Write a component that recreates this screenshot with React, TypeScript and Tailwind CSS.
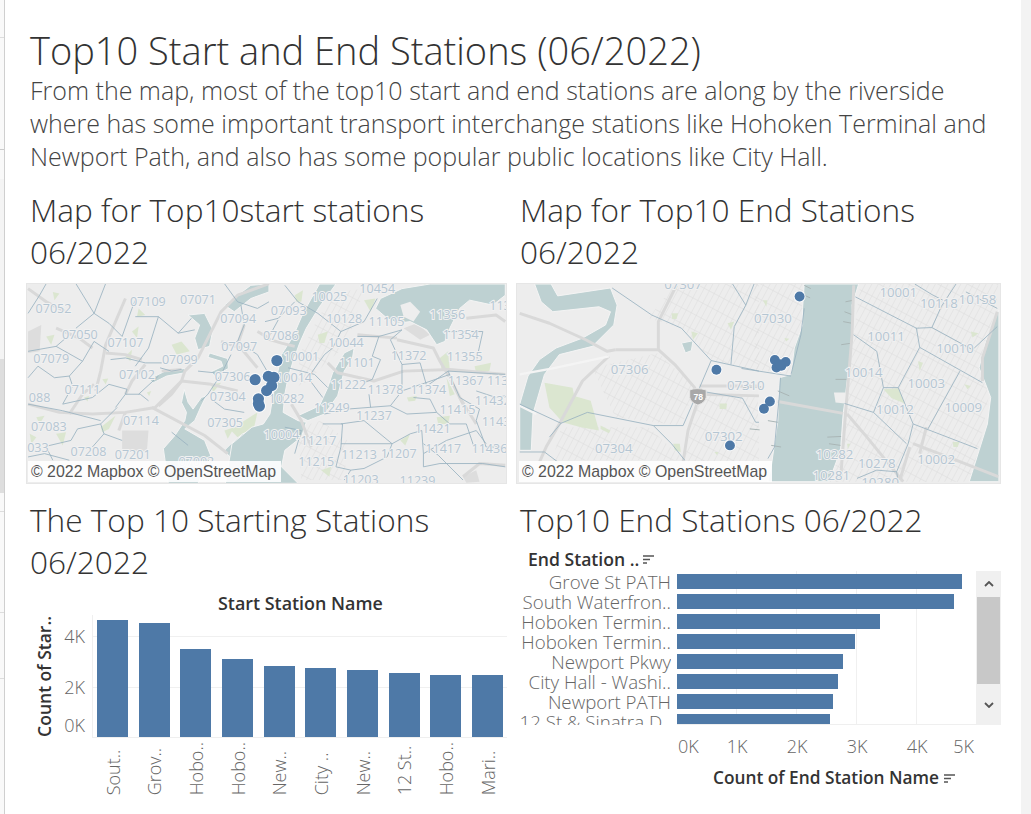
type Tile = {
  offset: [number, number]
  water: string[]
  land?: string[]
  parks: string[]
  grey?: string[]
  grids?: string[]
  roads: string[]
  minor?: string[]
  piers?: string[]
  lines: string[]
  labels: [string, number, number][]
}

// map coordinates are 3x screen pixels, every tile has its own origin
const startTiles: Tile[] = [
  {
    offset: [-6, -6],
    water: [
      'M478,325 L490,365 L505,385 L530,350 L545,345 L530,375 L510,420 L480,445 L540,480 L560,530 L520,610 L430,610 L415,505 L450,465 L480,420 L485,395 L470,365 Z',
      'M735,440 L700,445 L655,460 L620,490 L600,510 L640,560 L735,610 Z',
      'M490,100 L540,95 L565,145 L555,195 L520,205 L510,170 L525,130 Z',
      'M600,70 L640,40 L680,10 L735,6 L735,30 L680,50 L630,90 Z',
      'M555,215 L610,232 L612,262 L570,285 L560,272 L595,255 L590,240 L550,228 Z',
      'M370,295 L420,270 L480,262 L480,275 L425,285 L385,305 Z',
    ],
    parks: [
      'M440,190 L470,180 L495,210 L455,220 Z',
      'M225,440 L270,405 L250,445 L230,455 Z',
      'M660,420 L700,395 L690,440 L640,470 L620,450 Z',
      'M300,225 L320,205 L315,240 Z',
      'M60,165 L85,160 L75,190 Z',
      'M10,150 L35,170 L15,205 Z',
      'M320,150 L340,135 L335,170 Z',
      'M30,410 L55,405 L40,430 Z',
      'M90,460 L120,455 L110,495 Z',
      'M80,30 L100,35 L85,55 Z',
      'M560,310 L590,305 L565,335 Z',
      'M340,80 L360,100 L335,105 Z',
      'M10,460 L30,470 L15,490 Z',
      'M230,295 L248,292 L240,310 Z',
      'M175,350 L190,345 L185,362 Z',
      'M365,335 L378,330 L372,345 Z',
      'M600,450 L630,440 L610,475 Z',
    ],
    grey: ['M290,450 L370,450 L365,515 L290,510 Z', 'M5,150 L45,130 L40,210 L5,215 Z'],
    roads: [
      'M5,370 L100,395 L200,400 L300,395 L390,380 L470,300 L480,270 L520,230 L590,90 L640,40 L735,5',
      'M380,380 L540,465 L610,520',
      'M300,50 L270,120 L240,190 L225,270 L210,330',
      'M280,450 L300,395',
      'M5,20 L60,60 L120,90',
      'M470,300 L560,310 L640,330',
      'M350,235 L300,220 L240,215',
      'M410,270 L470,265',
      'M660,130 L640,190',
      'M700,150 L735,170',
      'M130,400 L170,340 L205,310',
      'M200,200 L160,170 L90,140',
      'M470,300 L440,340 L400,375',
      'M360,250 L320,300 L300,340',
      'M590,180 L650,200 L700,260',
    ],
    lines: [
      'M5,95 L40,40 L60,5',
      'M150,5 L205,95 L150,140',
      'M205,95 L250,125 L290,165 L320,80 L330,55',
      'M330,105 L400,105 L460,155 L510,145',
      'M400,105 L370,200 L330,255',
      'M255,235 L300,230 L360,245 L410,245',
      'M5,210 L90,195 L170,240 L205,180 L250,210',
      'M5,290 L35,255 L85,290 L130,285 L170,240',
      'M130,285 L140,315 L110,370 L200,350 L250,310 L305,325 L300,340 L270,380',
      'M5,370 L110,390 L225,420',
      'M225,430 L275,380',
      'M225,430 L155,445 L135,480 L50,500',
      'M225,430 L235,460 L200,500',
      'M235,460 L290,480',
      'M300,340 L345,340 L370,360',
      'M405,260 L440,270 L470,265',
      'M560,355 L600,385 L660,395',
      'M340,340 L400,285',
      'M440,455 L490,495',
      'M5,530 L55,520 L130,540',
      'M460,155 L500,110',
      'M600,5 L640,60 L700,80 L735,60',
      'M650,70 L660,130 L640,180',
      'M590,190 L640,180 L700,220 L735,280',
      'M620,220 L590,280 L550,340 L530,360',
      'M520,270 L570,275',
      'M240,5 L205,95',
      'M125,165 L90,195',
      'M60,500 L80,540',
    ],
    labels: [
      ['07052', 82, 94],
      ['07109', 368, 73],
      ['07071', 520, 68],
      ['07094', 642, 124],
      ['07050', 162, 174],
      ['07107', 300, 198],
      ['07097', 645, 209],
      ['07079', 75, 245],
      ['07099', 465, 248],
      ['07102', 335, 294],
      ['07306', 625, 300],
      ['07111', 170, 340],
      ['07304', 610, 362],
      ['088', 40, 364],
      ['07114', 347, 433],
      ['07305', 602, 438],
      ['07083', 68, 452],
      ['033', 35, 514],
      ['07208', 188, 527],
      ['07201', 322, 537],
      ['07002', 515, 556],
    ],
  },
  {
    offset: [717, -6],
    water: [
      'M165,6 L215,6 L165,75 L125,140 L105,185 L85,240 L70,290 L60,340 L55,395 L100,420 L125,425 L110,470 L60,510 L50,560 L100,610 L-120,610 L-100,490 L-40,440 L-5,430 L15,400 L25,340 L35,290 L50,220 L85,165 L115,95 Z',
      'M335,80 L350,50 L415,20 L500,6 L728,6 L728,40 L690,70 L620,55 L590,80 L560,140 L545,180 L520,190 L490,145 L440,120 L400,125 L370,110 Z',
      'M270,200 L240,215 L205,275 L190,320 L165,375 L100,405 L130,420 L180,400 L220,345 L240,270 L265,230 Z',
    ],
    land: ['M410,70 L440,60 L470,90 L450,120 L420,105 Z'],
    parks: [
      'M90,40 L115,25 L110,60 L95,60 Z',
      'M160,160 L190,150 L180,185 L165,185 Z',
      'M530,230 L555,210 L560,270 L535,270 Z',
      'M635,255 L685,245 L680,270 L640,275 Z',
      'M550,290 L575,340 L560,345 Z',
      'M430,350 L460,345 L455,360 L435,362 Z',
      'M520,410 L560,405 L555,430 L525,430 Z',
      'M410,480 L440,460 L425,495 Z',
      'M170,570 L200,560 L195,590 Z',
      'M300,55 L335,50 L320,90 Z',
      'M480,6 L530,10 L500,25 Z',
    ],
    grey: ['M420,140 L460,125 L500,160 L470,175 Z', 'M600,590 L640,570 L650,605 L610,608 Z'],
    grids: [
      'M225,30 L300,20 L250,190 L190,240 L130,300 L90,320 L110,210 L165,100 Z',
      'M100,440 L170,420 L250,480 L240,600 L110,600 Z',
    ],
    roads: [
      'M190,245 L220,275 L330,300 L420,270 L560,265 L728,280',
      'M400,175 L510,200 L530,240 L560,290 L600,370',
      'M0,170 L50,185 L90,195',
      'M80,370 L110,420 L140,500',
      'M590,350 L640,430',
      'M600,590 L650,550 L728,555',
      'M610,110 L700,100 L728,120',
      'M280,160 L400,170',
    ],
    lines: [
      'M0,120 L40,110 L90,60',
      'M40,115 L10,170',
      'M160,95 L230,150 L300,120 L340,50',
      'M230,150 L205,200 L180,220',
      'M180,220 L130,290 L175,350',
      'M70,260 L150,280 L190,320',
      'M280,165 L345,165 L325,225 L350,235 L325,295 L300,305',
      'M345,165 L415,145 L380,175 L415,250 L415,330 L380,375 L430,400 L520,395 L500,355 L450,350',
      'M415,250 L470,245 L490,315 L555,270 L590,350 L650,385 L640,420 L670,500 L725,500',
      'M555,270 L728,280',
      'M415,330 L560,280',
      'M180,400 L250,385 L380,375',
      'M230,430 L300,420 L385,490 L440,460 L475,450 L480,520 L550,480 L640,450',
      'M175,430 L235,430 L230,500 L215,560 L260,570',
      'M230,490 L385,490 L370,530 L300,565 L260,570 L240,600',
      'M480,490 L525,525 L600,600',
      'M480,520 L480,560 L530,550 L660,550 L728,560',
      'M640,450 L670,490',
      'M315,340 L320,380',
      'M520,395 L560,430 L610,430 L640,520',
      'M60,10 L100,60 L160,95',
      'M540,150 L660,150 L640,240',
      'M640,330 L700,350 L728,345',
      'M60,440 L110,450 L90,520',
    ],
    labels: [
      ['10454', 340, 33],
      ['10025', 195, 59],
      ['07093', 72, 100],
      ['113', 712, 86],
      ['10128', 240, 124],
      ['11105', 368, 132],
      ['11356', 552, 113],
      ['07086', 48, 177],
      ['10044', 245, 196],
      ['11354', 593, 173],
      ['10001', 110, 240],
      ['11101', 278, 257],
      ['11372', 435, 237],
      ['11355', 605, 238],
      ['10014', 88, 303],
      ['11367', 608, 313],
      ['11222', 252, 323],
      ['11378', 365, 339],
      ['11374', 495, 339],
      ['113', 705, 313],
      ['10282', 65, 367],
      ['11432', 690, 373],
      ['11249', 202, 393],
      ['11415', 583, 399],
      ['11237', 330, 417],
      ['11421', 508, 459],
      ['1143', 700, 437],
      ['10004', 50, 475],
      ['11217', 162, 495],
      ['11417', 540, 517],
      ['11436', 680, 519],
      ['11213', 285, 535],
      ['11207', 405, 533],
      ['11215', 155, 559],
      ['11203', 290, 612],
      ['11239', 462, 614],
    ],
  },
]

const endTiles: Tile[] = [
  {
    offset: [-6, -6],
    water: [
      'M55,6 L105,6 L125,42 L285,18 L305,70 L295,130 L230,195 L130,220 L85,280 L50,400 L45,510 L10,510 L10,370 L35,285 L70,235 L120,200 L200,170 L270,130 L285,90 L250,75 L110,90 L75,60 Z',
      'M500,185 L535,178 L530,208 L512,215 Z',
    ],
    parks: [
      'M85,305 L170,320 L175,345 L225,360 L250,450 L195,440 L140,425 L100,380 Z',
      'M255,435 L285,450 L280,458 L255,445 Z',
      'M470,95 L490,95 L485,112 L472,112 Z',
      'M530,150 L550,155 L535,175 Z',
      'M615,368 L638,368 L636,385 L616,385 Z',
      'M475,490 L495,490 L498,515 L480,510 Z',
      'M640,125 L660,120 L650,145 Z',
      'M600,515 L612,515 L608,525 Z',
    ],
    grids: [
      'M400,110 L500,140 L590,238 L735,270 L735,6 L480,6 Z',
      'M555,340 L735,350 L735,545 L505,545 Z',
      'M230,260 L430,215 L540,320 L500,435 L300,410 Z',
      'M110,540 L135,440 L400,440 L510,540 Z',
    ],
    roads: [
      'M10,95 L100,125 L210,175 L275,210 L300,205',
      'M300,205 L430,205 L480,250 L540,320 L550,360 L520,450 L505,545',
      'M430,205 L430,120 L470,40 L485,10',
      'M280,225 L200,300 L130,430 L90,500 L70,545',
      'M555,315 L735,315',
      'M555,340 L735,345',
    ],
    minor: ['M10,280 L110,262 L280,225', 'M10,375 L60,400'],
    lines: [
      'M290,18 L410,100 L500,140 L590,238 L735,270',
      'M590,238 L555,320 L505,435 L415,435 L215,395 L135,428 L10,370',
      'M720,6 L695,70 L660,135 L650,250',
      'M655,6 L695,70',
      'M555,330 L685,352 L725,425 L735,425',
      'M415,435 L470,490 L510,540',
      'M135,428 L100,470',
      'M10,515 L85,515 L125,545',
    ],
    labels: [
      ['07307', 505, 20],
      ['07306', 343, 278],
      ['07310', 695, 326],
      ['07302', 628, 482],
      ['07304', 295, 518],
    ],
  },
  {
    offset: [726, -6],
    water: [
      'M140,6 L305,6 L285,70 L290,160 L270,300 L262,370 L258,400 L250,510 L215,605 L30,605 L40,560 L60,420 L65,290 L100,280 L110,200 L135,130 L135,80 Z',
      'M730,85 L690,180 L670,260 L690,310 L705,350 L695,430 L670,510 L640,605 L730,605 Z',
    ],
    land: ['M230,335 L265,335 L265,368 L235,365 Z', 'M0,300 L62,292 L58,420 L0,425 Z'],
    parks: [
      'M380,325 L425,322 L445,368 L405,352 Z',
      'M485,240 L500,245 L490,270 Z',
      'M625,310 L645,315 L635,325 Z',
      'M590,485 L610,485 L605,500 L592,500 Z',
      'M645,150 L668,155 L650,168 Z',
      'M15,55 L28,55 L25,75 Z',
      'M80,170 L95,172 L85,180 Z',
      'M270,490 L280,490 L272,505 Z',
    ],
    grids: [
      'M-10,6 L140,6 L130,160 L100,280 L-10,265 Z',
      'M310,6 L728,6 L720,85 L690,180 L670,260 L700,340 L670,510 L640,605 L215,605 L255,500 L270,300 L290,160 Z',
    ],
    roads: [
      'M60,362 L258,398',
      'M290,10 L285,160 L265,400 L250,600',
      'M270,400 L330,470 L440,605',
      'M470,490 L600,540 L728,590',
      'M460,500 L430,600',
      'M725,90 L680,230 L680,300',
      'M510,440 L490,520',
    ],
    piers: [
      'M265,60 L290,55', 'M262,90 L288,100', 'M258,120 L285,125', 'M252,190 L285,185', 'M235,295 L268,295',
      'M210,470 L252,468', 'M215,490 L250,495', 'M60,330 L95,345', 'M60,425 L30,420', 'M40,495 L70,500',
      'M140,10 L160,20', 'M140,40 L158,48', 'M-50,320 L10,318', 'M-25,445 L5,448',
    ],
    lines: [
      'M295,45 L480,140 L490,198 L680,305',
      'M478,140 L527,138 L555,75 L600,6',
      'M527,138 L650,205 L725,135',
      'M490,198 L425,320 L380,320 L360,210 L290,160',
      'M425,320 L470,430 L455,490 L420,575 L425,605',
      'M380,320 L350,395 L262,368',
      'M350,395 L450,490',
      'M470,430 L665,505',
      'M515,445 L612,270',
      'M475,6 L527,38 L560,55',
      'M630,30 L725,80',
      'M140,80 L130,160 L100,280',
      'M68,290 L65,340 L50,500 L30,535',
      'M-50,262 L100,285',
      'M300,595 L360,570 L420,575',
    ],
    labels: [
      ['07030', 45, 124],
      ['10001', 425, 45],
      ['10118', 548, 78],
      ['10158', 665, 68],
      ['10011', 388, 180],
      ['10010', 597, 215],
      ['10014', 320, 289],
      ['10003', 510, 320],
      ['10012', 415, 401],
      ['10009', 622, 395],
      ['10002', 540, 552],
      ['10282', 232, 537],
      ['10278', 360, 565],
      ['10281', 222, 601],
      ['10280', 370, 622],
    ],
  },
]

const startDots: [number, number][] = [
  [753, 232],
  [687, 290],
  [727, 280],
  [744, 283],
  [737, 308],
  [722, 323],
  [697, 348],
  [697, 363],
  [700, 370],
]

const endDots: [number, number][] = [
  [852, 38],
  [600, 260],
  [777, 230],
  [782, 253],
  [797, 248],
  [810, 236],
  [792, 243],
  [762, 356],
  [744, 378],
  [641, 489],
]

function StationMap({ id, width, tiles, dots, labelSize, dotSize }: { id: string; width: number; tiles: Tile[]; dots: [number, number][]; labelSize: number; dotSize: number }) {
  const layer = (draw: (t: Tile) => React.ReactNode) =>
    tiles.map((t, i) => (
      <g key={i} transform={`translate(${t.offset[0]},${t.offset[1]})`}>
        {draw(t)}
      </g>
    ))

  return (
    <div className="relative h-[201px] border border-[#e6e6e6] bg-[#ededed] overflow-hidden">
      <svg viewBox={`0 0 ${width} 603`} className="block w-full h-full">
        <defs>
          <pattern id={`${id}-streets`} width="17" height="42" patternUnits="userSpaceOnUse" patternTransform="rotate(28)">
            <path d="M0,0 H17 M0,0 V42" stroke="#dcdcdc" strokeWidth="3" fill="none" />
          </pattern>
        </defs>
        {layer((t) => t.grids?.map((d) => <path key={d} d={d} fill={`url(#${id}-streets)`} />))}
        {layer((t) => t.parks.map((d) => <path key={d} d={d} fill="#dbe6d0" />))}
        {layer((t) => t.grey?.map((d) => <path key={d} d={d} fill="#dddddd" />))}
        {layer((t) => t.water.map((d) => <path key={d} d={d} fill="#bed1d2" stroke="#f4f4f4" strokeWidth="3" />))}
        {layer((t) => t.land?.map((d) => <path key={d} d={d} fill="#eeeeee" />))}
        {layer((t) => t.piers?.map((d) => <path key={d} d={d} fill="none" stroke="#a9b5b5" strokeWidth="3" />))}
        {layer((t) => t.roads.map((d) => <path key={d} d={d} fill="none" stroke="#d9d9d9" strokeWidth="9" strokeLinejoin="round" />))}
        {layer((t) => t.minor?.map((d) => <path key={d} d={d} fill="none" stroke="#f4f4f4" strokeWidth="7" />))}
        {layer((t) => t.lines.map((d) => <path key={d} d={d} fill="none" stroke="#9ab3c1" strokeWidth="2.6" strokeLinejoin="round" />))}
        {id === 'end' && (
          <g transform="translate(519,313)">
            <path d="M0,8 Q20,0 50,8 L50,30 Q48,46 25,54 Q2,46 0,30 Z" fill="#a8a8a8" stroke="#e8e8e8" strokeWidth="3" />
            <text x="26" y="38" fontSize="26" fontFamily="Liberation Sans" fontWeight="700" fill="#ffffff" textAnchor="middle">78</text>
          </g>
        )}
        {layer((t) =>
          t.labels.map(([text, x, y]) => (
            <text key={text + x} x={x} y={y} textAnchor="middle" fontFamily="Open Sans" fontSize={labelSize} fill="#b5c6d3" stroke="#f1f1f1" strokeWidth="6" paintOrder="stroke">
              {text}
            </text>
          )),
        )}
        {dots.map(([x, y], i) => (
          <circle key={i} cx={x} cy={y} r={dotSize + 3} fill="#ffffff" opacity="0.85" />
        ))}
        {dots.map(([x, y], i) => (
          <circle key={i} cx={x} cy={y} r={dotSize} fill="#4e79a7" />
        ))}
      </svg>
      <div className={`absolute bottom-[1px] h-[21px] w-[253px] bg-white/90 pl-[3px] text-[15.9px] leading-[21px] text-[#555] font-['Liberation_Sans',sans-serif] whitespace-nowrap ${id === 'start' ? 'left-[1px]' : 'left-[2px]'}`}>
        © 2022 Mapbox © OpenStreetMap
      </div>
    </div>
  )
}

function SortIcon() {
  return (
    <svg width="11" height="9" viewBox="0 0 11 9" className="shrink-0">
      <path d="M0,1 H11 M0,4.5 H7 M0,8 H4" stroke="#555" strokeWidth="1.4" fill="none" />
    </svg>
  )
}

const startBars = [
  { label: 'Sout..', top: 6 },
  { label: 'Grov..', top: 9 },
  { label: 'Hobo..', top: 35 },
  { label: 'Hobo..', top: 45 },
  { label: 'New..', top: 52 },
  { label: 'City ..', top: 54 },
  { label: 'New..', top: 56 },
  { label: '12 St..', top: 59 },
  { label: 'Hobo..', top: 61 },
  { label: 'Mari..', top: 61 },
]

function StartChart() {
  return (
    <div className="flex flex-col h-[231px]">
      <div className="h-[23px] pl-[192px] text-[17.9px] leading-[23px] font-semibold text-[#333] whitespace-nowrap">Start Station Name</div>
      <div className="flex h-[123px]">
        <div className="w-[33px] flex items-center justify-end pr-[5px]">
          <span className="[writing-mode:vertical-rl] rotate-180 text-[17.5px] leading-[20px] font-semibold text-[#333] whitespace-nowrap">Count of Star..</span>
        </div>
        <div className="relative w-[33px] text-[18px] font-light text-[#666]">
          <span className="absolute right-[7px] top-[10px] leading-[22px]">4K</span>
          <span className="absolute right-[7px] top-[61px] leading-[22px]">2K</span>
          <span className="absolute right-[7px] top-[99px] leading-[22px]">0K</span>
        </div>
        <div className="relative flex-1 flex items-end gap-[10.67px] pl-[4px] border-l border-b border-[#efefef]">
          <div className="absolute left-0 right-0 top-[21px] border-t border-[#f0f0f0]" />
          <div className="absolute left-0 right-0 top-[72px] border-t border-[#f0f0f0]" />
          {startBars.map((bar, i) => (
            <div key={i} className="relative w-[31px] shrink-0 bg-[#4e79a7]" style={{ height: 123 - bar.top }} />
          ))}
        </div>
      </div>
      <div className="flex pl-[66px] pt-[4px]">
        {startBars.map((bar, i) => (
          <div key={i} className="w-[41.67px] flex justify-center shrink-0">
            <span className="[writing-mode:vertical-rl] rotate-180 text-[18px] leading-[20px] font-light text-[#666] whitespace-nowrap">{bar.label}</span>
          </div>
        ))}
      </div>
    </div>
  )
}

const endBars = [
  { label: 'Grove St PATH', width: 285 },
  { label: 'South Waterfron..', width: 277 },
  { label: 'Hoboken Termin..', width: 203 },
  { label: 'Hoboken Termin..', width: 178 },
  { label: 'Newport Pkwy', width: 166 },
  { label: 'City Hall - Washi..', width: 161 },
  { label: 'Newport PATH', width: 156 },
  { label: '12 St & Sinatra D..', width: 153 },
]

function EndChart() {
  return (
    <div className="flex flex-col">
      <div className="h-[23px] pl-[12px] flex items-center gap-[4px] text-[17.6px] font-semibold text-[#333] whitespace-nowrap">
        End Station ..
        <SortIcon />
      </div>
      <div className="flex h-[154px]">
        <div className="w-[155px] shrink-0 h-full overflow-hidden text-right text-[18.7px] leading-[20px] font-light text-[#666] whitespace-nowrap pt-[1px]">
          {endBars.map((bar) => (
            <div key={bar.label + bar.width} className="h-[20px]">{bar.label}</div>
          ))}
        </div>
        <div className="relative ml-[6px] w-[300px] shrink-0 h-full overflow-hidden border-b border-[#efefef] pt-[3px] flex flex-col gap-[5px]">
          <div className="absolute inset-0 grid grid-cols-5">
            {[0, 1, 2, 3, 4].map((n) => (
              <div key={n} className="border-r border-[#f0f0f0]" />
            ))}
          </div>
          {endBars.map((bar) => (
            <div key={bar.label + bar.width} className="relative h-[15px] shrink-0 bg-[#4e79a7]" style={{ width: bar.width }} />
          ))}
        </div>
        <div className="w-[24px] shrink-0 h-full bg-[#f0f0f0] flex flex-col">
          <div className="h-[26px] flex items-center justify-center">
            <svg width="10" height="6" viewBox="0 0 10 6"><path d="M1,5 L5,1 L9,5" stroke="#555" strokeWidth="1.8" fill="none" /></svg>
          </div>
          <div className="h-[87px] w-[23px] bg-[#c8c8c8]" />
          <div className="flex-1 flex items-center justify-center">
            <svg width="10" height="6" viewBox="0 0 10 6"><path d="M1,1 L5,5 L9,1" stroke="#555" strokeWidth="1.8" fill="none" /></svg>
          </div>
        </div>
      </div>
      <div className="flex pl-[161px] pt-[9px] text-[18px] leading-[24px] font-light text-[#666]">
        <div className="w-[30px] pl-[1px]">0K</div>
        <div className="w-[60px] text-center">1K</div>
        <div className="w-[60px] text-center">2K</div>
        <div className="w-[60px] text-center">3K</div>
        <div className="w-[60px] text-center">4K</div>
        <div className="w-[30px] text-right pr-[3px]">5K</div>
      </div>
      <div className="flex items-center gap-[5px] pl-[197px] pt-[8px] text-[17.3px] leading-[24px] font-semibold text-[#333] whitespace-nowrap">
        Count of End Station Name
        <SortIcon />
      </div>
    </div>
  )
}

const railSegments = [
  'h-[38px] bg-[#f9f9f9] border-b border-[#dddddd]',
  'h-[112px] bg-[#f9f9f9] border-b border-[#cccccc]',
  'h-[29px] bg-[#f9f9f9]',
  'h-[180px] bg-[#f4f4f4]',
  'h-[134px] bg-[#dedede]',
  'h-[19px] bg-[#f9f9f9] border-b border-[#dddddd]',
  'h-[101px] bg-[#f9f9f9] border-b border-[#dddddd]',
  'h-[66px] bg-[#f9f9f9] border-b border-[#dddddd]',
  'flex-1 bg-[#f9f9f9]',
]

export default function App() {
  return (
    <div className="flex h-[814px] w-[1031px] overflow-hidden bg-white font-['Open_Sans',sans-serif] text-[#3a3a3a]">
      <div className="w-[5px] shrink-0 flex flex-col border-r border-[#cfcfcf]">
        {railSegments.map((c) => (
          <div key={c} className={c} />
        ))}
      </div>
      <div className="flex-1 pl-[21px] pt-[26px]">
        <div className="pl-[4px]">
          <h1 className="text-[38px] leading-[48px] font-light text-[#333] whitespace-nowrap">Top10 Start and End Stations (06/2022)</h1>
          <p className="text-[25px] leading-[33px] font-light text-[#444] whitespace-nowrap">
            From the map, most of the top10 start and end stations are along by the riverside
            <br />
            where has some important transport interchange stations like Hohoken Terminal and
            <br />
            Newport Path, and also has some popular public locations like City Hall.
          </p>
        </div>
        <div className="mt-[16px] grid grid-cols-[481px_485px] gap-x-[9px]">
          <div>
            <h2 className="pl-[4px] h-[94px] text-[31.6px] leading-[42px] font-light text-[#333]">
              Map for Top10start stations
              <br />
              06/2022
            </h2>
            <StationMap id="start" width={1443} tiles={startTiles} dots={startDots} labelSize={38} dotSize={17} />
          </div>
          <div>
            <h2 className="pl-[4px] h-[94px] text-[31.6px] leading-[42px] font-light text-[#333]">
              Map for Top10 End Stations
              <br />
              06/2022
            </h2>
            <StationMap id="end" width={1455} tiles={endTiles} dots={endDots} labelSize={40} dotSize={15} />
          </div>
          <div className="mt-[15px]">
            <h2 className="pl-[4px] h-[93px] text-[31.6px] leading-[42px] font-light text-[#333]">
              The Top 10 Starting Stations
              <br />
              06/2022
            </h2>
            <StartChart />
          </div>
          <div className="mt-[15px]">
            <h2 className="pl-[4px] h-[49px] text-[31.6px] leading-[42px] font-light text-[#333]">Top10 End Stations 06/2022</h2>
            <EndChart />
          </div>
        </div>
      </div>
      <div className="w-[10px] shrink-0 bg-[#f3f3f3]" />
    </div>
  )
}
